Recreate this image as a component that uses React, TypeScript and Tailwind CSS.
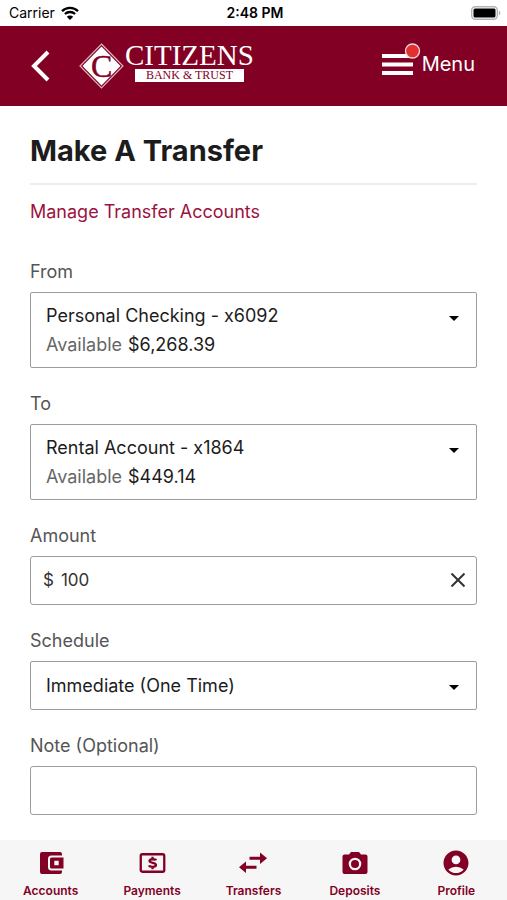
import { useState } from "react";
import type { ReactNode } from "react";
import { MdAccountCircle } from "react-icons/md";

interface Account {
  id: string;
  name: string;
  available: string;
}

interface AccountFieldProps {
  id: string;
  label: string;
  value: string;
  onChange: (value: string) => void;
}

const accounts: Account[] = [
  { id: "x6092", name: "Personal Checking", available: "$6,268.39" },
  { id: "x1864", name: "Rental Account", available: "$449.14" },
];

const navItems: { label: string; icon: ReactNode }[] = [
  { label: "Accounts", icon: <WalletIcon /> },
  { label: "Payments", icon: <PaymentIcon /> },
  { label: "Transfers", icon: <TransferIcon /> },
  { label: "Deposits", icon: <CameraIcon /> },
  { label: "Profile", icon: <MdAccountCircle className="w-[30px] h-[30px]" /> },
];

function WalletIcon() {
  return (
    <svg viewBox="0 0 28 28" className="w-7 h-7" fill="currentColor" aria-hidden="true">
      <path d="M5 3h18a2 2 0 0 1 2 2v1.500H14.500a3.500 3.500 0 0 0-3.500 3.500v8a3.500 3.500 0 0 0 3.500 3.500H25V23a2 2 0 0 1-2 2H5a2 2 0 0 1-2-2V5a2 2 0 0 1 2-2z" />
      <path
        fillRule="evenodd"
        d="M14.500 8.500H26.500v11H14.500a1.500 1.500 0 0 1-1.500-1.500v-8a1.500 1.500 0 0 1 1.500-1.500zM17.300 11.800v4.400h4.400v-4.400z"
      />
    </svg>
  );
}

function PaymentIcon() {
  return (
    <svg viewBox="0 0 28 28" className="w-7 h-7" fill="none" stroke="currentColor" aria-hidden="true">
      <rect x="2.750" y="5.250" width="23.500" height="17.500" rx="1.500" strokeWidth="2.300" />
      <path
        d="M18 11.300c-.4-1.200-6.500-1.800-6.500 .5 0 2.600 6.500 1.500 6.500 4.300 0 2.400-6.300 2-7 .2M14.500 7.800v2.500M14.500 17.500v2.700"
        strokeWidth="2.300"
      />
    </svg>
  );
}

function TransferIcon() {
  return (
    <svg viewBox="0 0 28 28" className="w-7 h-7" fill="currentColor" aria-hidden="true">
      <path d="M10.500 7.800H21V3.500l7 5.700-7 5.700v-4.200H10.500zM17.500 16.800H7v-4.300L0 18.200l7 5.700v-4.200h10.500z" />
    </svg>
  );
}

function CameraIcon() {
  return (
    <svg viewBox="0 0 28 28" className="w-7 h-7" fill="currentColor" aria-hidden="true">
      <path
        fillRule="evenodd"
        d="M10 3h8l2 2.500h4.500a2 2 0 0 1 2 2V23a2 2 0 0 1-2 2h-21a2 2 0 0 1-2-2V7.500a2 2 0 0 1 2-2H8zM14 8.700a6.300 6.300 0 1 0 0 12.600 6.300 6.300 0 0 0 0-12.600z"
      />
      <circle cx="14" cy="15" r="4" />
    </svg>
  );
}

function Caret() {
  return (
    <svg viewBox="0 0 10 5" className="w-[10px] h-[5px] pointer-events-none" aria-hidden="true">
      <path d="M0 0h10L5 5z" />
    </svg>
  );
}

function Logo() {
  return (
    <div className="flex items-center">
      <svg viewBox="0 0 46 46" className="w-[46px] h-[46px]" aria-hidden="true">
        <path d="M22.500 1L44 23 22.500 45 1 23z" fill="none" stroke="#e0b3bf" strokeWidth="1.200" />
        <path d="M22.500 3.500L41.500 23 22.500 42.500 3.500 23z" fill="#fff" />
        <text
          x="12"
          y="34"
          fontFamily="'Liberation Serif', serif"
          fontSize="32"
          fill="#820024"
          stroke="#820024"
          strokeWidth=".5"
        >
          C
        </text>
      </svg>
      <div className="flex flex-col items-center pb-2 font-['Liberation_Serif',serif]">
        <span className="text-[29px] leading-[27px]">CITIZENS</span>
        <span className="w-[109px] h-[13px] bg-white text-center text-xs leading-[13px] text-[#820024]">
          BANK &amp; TRUST
        </span>
      </div>
    </div>
  );
}

function StatusBar() {
  return (
    <div className="grid grid-cols-3 items-center h-[26px] pl-[9px] pr-[6px] text-sm text-black">
      <div className="flex items-center gap-[6px]">
        <span>Carrier</span>
        <svg viewBox="0 0 18 14" className="w-[18px] h-[14px]" aria-hidden="true">
          <path d="M1 5.200a11.500 11.500 0 0 1 16 0M3.900 8a7.500 7.500 0 0 1 10.200 0" fill="none" stroke="#000" strokeWidth="2.300" />
          <path d="M9 14L5.800 10.700a4.600 4.600 0 0 1 6.400 0z" />
        </svg>
      </div>
      <span className="text-center font-semibold">2:48 PM</span>
      <svg viewBox="0 0 30 14" className="w-[30px] h-[14px] justify-self-end" aria-hidden="true">
        <rect x=".7" y=".7" width="25.600" height="12.600" rx="3.500" fill="#fff" stroke="#b3b3b3" strokeWidth="1.400" />
        <rect x="2.500" y="2.500" width="22" height="9" rx="1.500" />
        <path d="M27.800 4.500c2 .8 2 4.200 0 5z" fill="#b3b3b3" />
      </svg>
    </div>
  );
}

function AccountField({ id, label, value, onChange }: AccountFieldProps) {
  const account = accounts.find((a) => a.id === value);

  return (
    <div>
      <label htmlFor={id} className="block mb-2 leading-6 text-[#555]">
        {label}
      </label>
      <div className="border border-[#9c9c9c] rounded-[2px] h-[76px] pt-2">
        <div className="grid items-center">
          <select
            id={id}
            value={value}
            onChange={(e) => onChange(e.target.value)}
            className="col-start-1 row-start-1 appearance-none w-full h-[30px] pl-[15px] pr-10 bg-transparent text-[#1c1c1c]"
          >
            {accounts.map((a) => (
              <option key={a.id} value={a.id}>
                {a.name} - {a.id}
              </option>
            ))}
          </select>
          <div className="col-start-1 row-start-1 justify-self-end mr-[17px] mt-1 pointer-events-none">
            <Caret />
          </div>
        </div>
        <div className="flex gap-[6px] pl-[15px] leading-[28px]">
          <span className="text-[#666]">Available</span>
          <span className="text-[#1c1c1c]">{account?.available}</span>
        </div>
      </div>
    </div>
  );
}

export default function App() {
  const [from, setFrom] = useState("x6092");
  const [to, setTo] = useState("x1864");
  const [amount, setAmount] = useState("100");
  const [note, setNote] = useState("");

  return (
    <div className="flex flex-col min-h-screen bg-white font-['Inter',sans-serif]">
      <StatusBar />

      {/* Header */}
      <header className="flex items-center h-20 pl-[30px] pr-8 bg-[#820024] text-white">
        <button type="button" aria-label="Back" className="mr-[29px]">
          <svg viewBox="0 0 20 32" className="w-5 h-8" fill="none" stroke="currentColor" strokeWidth="4">
            <path d="M18 2L4 16l14 14" />
          </svg>
        </button>
        <Logo />
        <button type="button" className="flex items-center ml-auto pb-1 text-xl">
          <svg viewBox="0 0 40 36" className="w-10 h-9 mb-2" aria-hidden="true">
            <path d="M0 14h31M0 22.500h31M0 31h31" stroke="#fff" strokeWidth="4" />
            <circle cx="30.500" cy="9" r="7" fill="#e0312f" stroke="#f3d5da" strokeWidth="1.300" />
          </svg>
          Menu
        </button>
      </header>

      <main className="px-[30px] pt-[27px] pb-[25px] text-lg">
        <h1 className="pb-[14px] border-b-2 border-[#ededed] text-[29px] leading-9 font-bold text-[#1c1c1c]">
          Make A Transfer
        </h1>
        <a href="#manage" className="block w-fit mt-[15px] leading-6 text-[#9b1240]">
          Manage Transfer Accounts
        </a>

        <form className="flex flex-col gap-6 mt-9" onSubmit={(e) => e.preventDefault()}>
          <AccountField id="from" label="From" value={from} onChange={setFrom} />
          <AccountField id="to" label="To" value={to} onChange={setTo} />

          <div>
            <label htmlFor="amount" className="block mb-2 leading-6 text-[#555]">
              Amount
            </label>
            <div className="flex items-center h-[49px] pl-3 pr-[11px] border border-[#9c9c9c] rounded-[3px] text-[#333]">
              <span className="text-[17px]">$</span>
              <input
                id="amount"
                inputMode="decimal"
                value={amount}
                onChange={(e) => setAmount(e.target.value)}
                className="flex-1 min-w-0 pl-[7px] text-[17px] outline-none"
              />
              <button type="button" aria-label="Clear amount" onClick={() => setAmount("")} className="pb-[2px]">
                <svg viewBox="0 0 14 14" className="block w-[14px] h-[14px]" stroke="#333" strokeWidth="2">
                  <path d="M.5 .5l13 13M13.500 .5l-13 13" />
                </svg>
              </button>
            </div>
          </div>

          <div>
            <label htmlFor="schedule" className="block mb-2 leading-6 text-[#555]">
              Schedule
            </label>
            <div className="grid items-center h-[49px] border border-[#9c9c9c] rounded-[2px]">
              <select
                id="schedule"
                className="col-start-1 row-start-1 appearance-none w-full h-full pl-[15px] pr-10 bg-transparent text-[#1c1c1c]"
              >
                <option>Immediate (One Time)</option>
              </select>
              <div className="col-start-1 row-start-1 justify-self-end mr-[17px] mt-1 pointer-events-none">
                <Caret />
              </div>
            </div>
          </div>

          <div>
            <label htmlFor="note" className="block mb-2 leading-6 text-[#555]">
              Note (Optional)
            </label>
            <input
              id="note"
              value={note}
              onChange={(e) => setNote(e.target.value)}
              className="block w-full h-[49px] px-[15px] border border-[#9c9c9c] rounded-[3px]"
            />
          </div>
        </form>
      </main>

      {/* Bottom navigation */}
      <nav className="sticky bottom-0 mt-auto grid grid-cols-5 h-[60px] bg-[#f6f6f6] text-[#820024]">
        {navItems.map((item) => (
          <a key={item.label} href={`#${item.label.toLowerCase()}`} className="flex flex-col items-center pt-2">
            <span className="flex items-center justify-center h-[30px]">{item.icon}</span>
            <span className="mt-[5px] text-xs leading-4 font-semibold">{item.label}</span>
          </a>
        ))}
      </nav>
    </div>
  );
}
